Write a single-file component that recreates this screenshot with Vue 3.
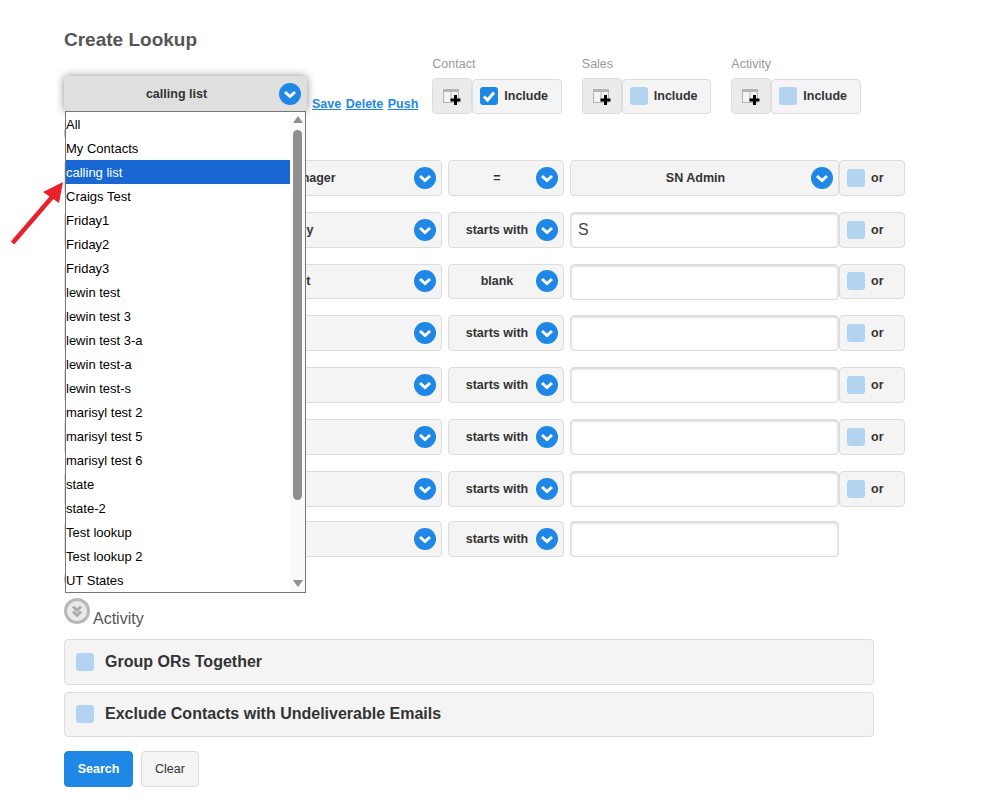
<template>
  <div class="page">
    <h2 class="title">Create Lookup</h2>

    <div class="toolbar">
      <div class="lookup">
        <div class="select lookup-select">
          <span class="select-text">calling list</span>
          <span class="chev"><svg viewBox="0 0 22 22"><path d="M6 9l5 4.5L16 9" /></svg></span>
        </div>
        <div class="lookup-list">
          <ul>
            <li v-for="name in lookups" :key="name" :class="{ active: name === 'calling list' }">{{ name }}</li>
          </ul>
          <div class="scroll">
            <span class="arrow-up"></span>
            <span class="thumb"></span>
            <span class="arrow-down"></span>
          </div>
        </div>
      </div>

      <div class="links">
        <a href="#">Save</a>
        <a href="#">Delete</a>
        <a href="#">Push</a>
      </div>

      <div class="groups">
        <div v-for="g in groups" :key="g.name" class="group">
          <div class="group-label">{{ g.name }}</div>
          <div class="group-controls">
            <button class="add-btn">
              <svg width="18" height="16" viewBox="0 0 18 16">
                <rect x="0.5" y="0.5" width="15" height="13" fill="#f4f4f4" stroke="#b4b4b4" />
                <rect x="0" y="0" width="16" height="3" fill="#b4b4b4" />
                <path d="M8 3v10" stroke="#b4b4b4" fill="none" />
                <path d="M12.5 6v10M7.5 11h10" stroke="#000" stroke-width="3" fill="none" />
              </svg>
            </button>
            <div class="box include">
              <span class="check" :class="{ on: g.checked }">
                <svg v-if="g.checked" viewBox="0 0 18 18"><path d="M4 9.5l3.5 3.5L14 5.5" /></svg>
              </span>
              Include
            </div>
          </div>
        </div>
      </div>
    </div>

    <div class="section-head">
      <span class="collapse">
        <svg viewBox="0 0 26 26"><path d="M9 8.5l4 4 4-4M9 13.5l4 4 4-4" /></svg>
      </span>
    </div>

    <div class="rows">
      <div v-for="(r, i) in rows" :key="i" class="row">
        <div class="select field">
          <span class="select-text">{{ r.field }}</span>
          <span class="chev"><svg viewBox="0 0 22 22"><path d="M6 9l5 4.5L16 9" /></svg></span>
        </div>
        <div class="select op">
          <span class="select-text">{{ r.op }}</span>
          <span class="chev"><svg viewBox="0 0 22 22"><path d="M6 9l5 4.5L16 9" /></svg></span>
        </div>
        <div v-if="r.dropdown" class="select value">
          <span class="select-text">{{ r.value }}</span>
          <span class="chev"><svg viewBox="0 0 22 22"><path d="M6 9l5 4.5L16 9" /></svg></span>
        </div>
        <input v-else class="value text-input" type="text" :value="r.value" />
        <div v-if="i < rows.length - 1" class="box or">
          <span class="check"></span>
          or
        </div>
      </div>
    </div>

    <div class="section-head sales-head">
      <span class="collapse">
        <svg viewBox="0 0 26 26"><path d="M9 8.5l4 4 4-4M9 13.5l4 4 4-4" /></svg>
      </span>
    </div>
    <div class="section-head activity-head">
      <span class="collapse">
        <svg viewBox="0 0 26 26"><path d="M9 8.5l4 4 4-4M9 13.5l4 4 4-4" /></svg>
      </span>
      <span>Activity</span>
    </div>

    <div class="box panel first"><span class="check"></span>Group ORs Together</div>
    <div class="box panel"><span class="check"></span>Exclude Contacts with Undeliverable Emails</div>

    <div class="actions">
      <button class="btn primary">Search</button>
      <button class="btn">Clear</button>
    </div>

    <!-- annotation arrow on top of the screenshot -->
    <svg class="pointer" width="70" height="70" viewBox="0 0 70 70">
      <path d="M12.5 63L53 16" stroke="#e8212b" stroke-width="4.5" fill="none" />
      <path d="M63 2L43 12L59 23Z" fill="#e8212b" />
    </svg>
  </div>
</template>

<script setup>
const lookups = [
  'All', 'My Contacts', 'calling list', 'Craigs Test', 'Friday1', 'Friday2', 'Friday3',
  'lewin test', 'lewin test 3', 'lewin test 3-a', 'lewin test-a', 'lewin test-s',
  'marisyl test 2', 'marisyl test 5', 'marisyl test 6', 'state', 'state-2',
  'Test lookup', 'Test lookup 2', 'UT States',
]

const groups = [
  { name: 'Contact', checked: true },
  { name: 'Sales', checked: false },
  { name: 'Activity', checked: false },
]

const rows = [
  { field: 'Contact Sales Region Manager', op: '=', value: 'SN Admin', dropdown: true },
  { field: 'Contact Main Company', op: 'starts with', value: 'S' },
  { field: 'Contacts Last Contact', op: 'blank', value: '' },
  { field: 'City', op: 'starts with', value: '' },
  { field: 'State', op: 'starts with', value: '' },
  { field: 'Zip', op: 'starts with', value: '' },
  { field: 'Phone', op: 'starts with', value: '' },
  { field: 'Email', op: 'starts with', value: '' },
]
</script>

<style scoped>
.page {
  position: relative;
  padding: 29px 0 0 64px;
  font-family: "Liberation Sans", Arial, sans-serif;
  font-size: 12.5px;
  color: #333;
}

.title {
  margin: 0;
  font-size: 19px;
  line-height: 22px;
  font-weight: bold;
  color: #555;
}

.toolbar {
  display: flex;
  margin-top: 5px;
  height: 58px;
}

.lookup {
  position: relative;
  width: 243px;
  margin-top: 20px;
}

.select {
  display: flex;
  align-items: center;
  box-sizing: border-box;
  padding: 0 5px 0 9px;
  background: #f4f4f4;
  border: 1px solid #ddd;
  border-radius: 4px;
  font-weight: bold;
}

.select-text {
  flex: 1;
  text-align: center;
  white-space: nowrap;
}

.lookup-select {
  height: 35px;
  background: #dfdfdf;
  border-color: #dfdfdf;
  box-shadow: 0 0 8px rgba(0, 0, 0, 0.45);
}

.chev {
  width: 22px;
  height: 22px;
  flex: none;
  border-radius: 50%;
  background: #1f87e5;
}

.chev svg {
  display: block;
}

.chev path {
  fill: none;
  stroke: #fff;
  stroke-width: 3;
}

.lookup-list {
  position: absolute;
  z-index: 5;
  top: 35px;
  left: 1px;
  display: flex;
  width: 241px;
  height: 482px;
  box-sizing: border-box;
  border: 1px solid #767676;
  background: #fff;
}

.lookup-list ul {
  width: 224px;
  margin: 0;
  padding: 0;
  list-style: none;
}

.lookup-list li {
  height: 24px;
  line-height: 25px;
  font-size: 13px;
  color: #000;
}

.lookup-list li.active {
  background: #1967d2;
  color: #fff;
}

.scroll {
  flex: 1;
  display: flex;
  flex-direction: column;
  align-items: center;
  background: #fafafa;
}

.arrow-up,
.arrow-down {
  width: 0;
  height: 0;
  border-left: 5px solid transparent;
  border-right: 5px solid transparent;
}

.arrow-up {
  margin-top: 4px;
  border-bottom: 7px solid #8f8f8f;
}

.arrow-down {
  margin-top: 80px;
  border-top: 7px solid #8f8f8f;
}

.thumb {
  width: 9px;
  height: 370px;
  margin-top: 7px;
  border-radius: 5px;
  background: #8f8f8f;
}

.links {
  display: flex;
  gap: 4.5px;
  align-self: flex-end;
  margin-left: 5px;
  padding-bottom: 3px;
  font-weight: bold;
}

.links a {
  color: #1f87e5;
}

.groups {
  display: flex;
  gap: 20px;
  margin-left: 14px;
}

.group-label {
  height: 22px;
  padding-top: 1px;
  box-sizing: border-box;
  line-height: 14px;
  color: #999;
}

.group-controls {
  display: flex;
  align-items: flex-start;
}

.add-btn {
  display: flex;
  align-items: center;
  justify-content: center;
  width: 40px;
  height: 35.5px;
  padding: 2px 0 0;
  background: #ebebeb;
  border: 1px solid #ddd;
  border-radius: 4px;
}

.box {
  display: flex;
  align-items: center;
  box-sizing: border-box;
  background: #f4f4f4;
  border: 1px solid #ddd;
  border-radius: 4px;
  font-weight: bold;
}

.include {
  width: 89.5px;
  height: 34.5px;
  margin-top: 1px;
  padding-left: 7px;
}

.check {
  width: 18px;
  height: 18px;
  flex: none;
  margin-right: 6px;
  border-radius: 3px;
  background: #b3d4f0;
}

.check.on {
  background: #1f87e5;
}

.check svg {
  display: block;
}

.check path {
  fill: none;
  stroke: #fff;
  stroke-width: 3;
}

.section-head {
  display: flex;
  align-items: flex-end;
  gap: 3px;
  height: 26px;
  margin-top: 6px;
  margin-bottom: 14px;
  font-size: 16px;
  line-height: 18px;
  color: #555;
}

.collapse {
  width: 26px;
  height: 26px;
  flex: none;
  box-sizing: border-box;
  border: 3px solid #b8b8b8;
  border-radius: 50%;
  background: #eaeaea;
}

.collapse svg {
  display: block;
  width: 26px;
  height: 26px;
  margin: -3px;
}

.collapse path {
  fill: none;
  stroke: #aaa;
  stroke-width: 3;
}

.rows {
  display: flex;
  flex-direction: column;
  gap: 16px;
}

.row {
  display: flex;
  height: 35.8px;
}

.row:last-child {
  margin-top: -1.6px;
}

.field {
  width: 378px;
  margin-right: 6px;
}

.op {
  width: 116px;
  margin-right: 6px;
}

.value {
  width: 269px;
}

.text-input {
  box-sizing: border-box;
  height: 36px;
  margin: 0;
  padding: 0 7px;
  background: #fff;
  border: 1px solid #ddd;
  border-radius: 4px;
  box-shadow: inset 0 1px 3px rgba(0, 0, 0, 0.2);
  outline: none;
  font-family: inherit;
  font-size: 16px;
  color: #444;
}

.or {
  width: 66px;
  padding-left: 7px;
}

.sales-head {
  margin-top: 9px;
  margin-bottom: 6px;
}

.activity-head {
  align-items: flex-start;
  margin-top: 0;
  margin-bottom: 15px;
}

.activity-head span:last-child {
  margin-top: 12px;
}

.panel {
  width: 810px;
  height: 45px;
  margin-bottom: 7px;
  padding-left: 11px;
  font-size: 16px;
}

.panel.first {
  height: 46px;
}

.panel .check {
  margin-right: 11px;
}

.actions {
  display: flex;
  gap: 8px;
  margin-top: 14px;
}

.btn {
  height: 36px;
  width: 58px;
  padding: 0;
  background: #f4f4f4;
  border: 1px solid #ddd;
  border-radius: 4px;
  font-family: inherit;
  font-size: 12.5px;
  color: #333;
}

.btn.primary {
  width: 69px;
  background: #1f87e5;
  border-color: #1f87e5;
  color: #fff;
  font-weight: bold;
}

.pointer {
  position: absolute;
  top: 180px;
  left: 0;
}
</style>

<style>
html,
body {
  background: #fff;
}
</style>
